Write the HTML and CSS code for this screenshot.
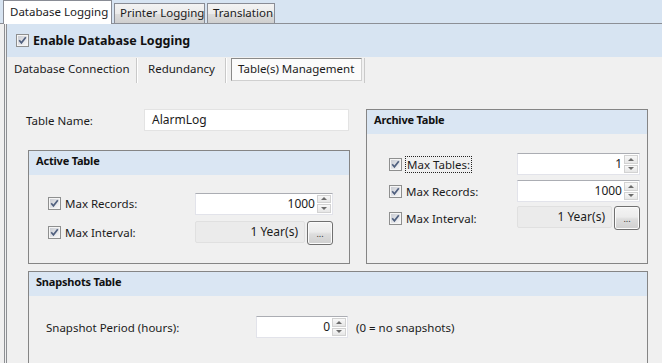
FILE: index.html
```html
<!DOCTYPE html>
<html>
<head>
<meta charset="utf-8">
<link rel="stylesheet" href="styles.css">
</head>
<body>
<svg class="defs" width="0" height="0">
  <defs>
    <linearGradient id="cbg" x1="0" y1="0" x2="1" y2="1">
      <stop offset="0" stop-color="#c9ccd3"/>
      <stop offset="1" stop-color="#f7f7f8"/>
    </linearGradient>
  </defs>
</svg>
<div class="tabstrip">
  <div class="tab tab-active t1">Database Logging</div>
  <div class="tab t2">Printer Logging</div>
  <div class="tab t3">Translation</div>
</div>
<div class="panel">
  <div class="enable-bar">
    <svg class="cb" width="13" height="13" viewBox="0 0 13 13"><rect x="0.5" y="0.5" width="12" height="12" fill="#f5f5f5" stroke="#8e8f8f"/><rect x="2" y="2" width="9" height="9" fill="url(#cbg)"/><path d="M3.2 6.3 L5.4 8.8 L9.8 3.2" stroke="#50607f" stroke-width="1.7" fill="none"/></svg>
    <span class="enable-label">Enable Database Logging</span>
  </div>
  <div class="subtabs">
    <div class="subtab s1">Database Connection</div>
    <div class="subtab s2">Redundancy</div>
    <div class="subtab-active">Table(s) Management</div>
    <div class="subtab-sep"></div>
  </div>
  <div class="content">
    <div class="left-col">
      <div class="name-row">
        <span class="name-label">Table Name:</span>
        <div class="textbox name-box">AlarmLog</div>
      </div>
      <div class="group active-group">
        <div class="group-head">Active Table</div>
        <div class="group-body">
          <div class="row">
            <svg class="cb" width="13" height="13" viewBox="0 0 13 13"><rect x="0.5" y="0.5" width="12" height="12" fill="#f5f5f5" stroke="#8e8f8f"/><rect x="2" y="2" width="9" height="9" fill="url(#cbg)"/><path d="M3.2 6.3 L5.4 8.8 L9.8 3.2" stroke="#50607f" stroke-width="1.7" fill="none"/></svg>
            <span class="lbl">Max Records:</span>
            <div class="textbox num"><span class="val">1000</span><span class="spin"><span class="sp up"><i></i></span><span class="sp down"><i></i></span></span></div>
          </div>
          <div class="row">
            <svg class="cb" width="13" height="13" viewBox="0 0 13 13"><rect x="0.5" y="0.5" width="12" height="12" fill="#f5f5f5" stroke="#8e8f8f"/><rect x="2" y="2" width="9" height="9" fill="url(#cbg)"/><path d="M3.2 6.3 L5.4 8.8 L9.8 3.2" stroke="#50607f" stroke-width="1.7" fill="none"/></svg>
            <span class="lbl">Max Interval:</span>
            <div class="interval"><div class="ro">1 Year(s)</div><div class="btn">...</div></div>
          </div>
        </div>
      </div>
    </div>
    <div class="group archive-group">
      <div class="group-head">Archive Table</div>
      <div class="group-body">
        <div class="row">
          <svg class="cb" width="13" height="13" viewBox="0 0 13 13"><rect x="0.5" y="0.5" width="12" height="12" fill="#f5f5f5" stroke="#8e8f8f"/><rect x="2" y="2" width="9" height="9" fill="url(#cbg)"/><path d="M3.2 6.3 L5.4 8.8 L9.8 3.2" stroke="#50607f" stroke-width="1.7" fill="none"/></svg>
          <span class="lbl"><span class="focus">Max Tables:</span></span>
          <div class="textbox num"><span class="val">1</span><span class="spin"><span class="sp up"><i></i></span><span class="sp down"><i></i></span></span></div>
        </div>
        <div class="row">
          <svg class="cb" width="13" height="13" viewBox="0 0 13 13"><rect x="0.5" y="0.5" width="12" height="12" fill="#f5f5f5" stroke="#8e8f8f"/><rect x="2" y="2" width="9" height="9" fill="url(#cbg)"/><path d="M3.2 6.3 L5.4 8.8 L9.8 3.2" stroke="#50607f" stroke-width="1.7" fill="none"/></svg>
          <span class="lbl">Max Records:</span>
          <div class="textbox num"><span class="val">1000</span><span class="spin"><span class="sp up"><i></i></span><span class="sp down"><i></i></span></span></div>
        </div>
        <div class="row">
          <svg class="cb" width="13" height="13" viewBox="0 0 13 13"><rect x="0.5" y="0.5" width="12" height="12" fill="#f5f5f5" stroke="#8e8f8f"/><rect x="2" y="2" width="9" height="9" fill="url(#cbg)"/><path d="M3.2 6.3 L5.4 8.8 L9.8 3.2" stroke="#50607f" stroke-width="1.7" fill="none"/></svg>
          <span class="lbl">Max Interval:</span>
          <div class="interval"><div class="ro">1 Year(s)</div><div class="btn">...</div></div>
        </div>
      </div>
    </div>
    <div class="group snapshot-group">
      <div class="group-head">Snapshots Table</div>
      <div class="group-body">
        <div class="row">
          <span class="lbl">Snapshot Period (hours):</span>
          <div class="textbox num"><span class="val">0</span><span class="spin"><span class="sp up"><i></i></span><span class="sp down"><i></i></span></span></div>
          <span class="hint">(0 = no snapshots)</span>
        </div>
      </div>
    </div>
  </div>
</div>
</body>
</html>
```
FILE: styles.css
```css
* { box-sizing: border-box; }
html, body { margin: 0; padding: 0; }
body {
  width: 662px;
  height: 363px;
  overflow: hidden;
  background: #f0f0f0;
  font-family: "Noto Sans", "Segoe UI", sans-serif;
  font-size: 11.5px;
  color: #1b1b1b;
}
.defs { position: absolute; }

/* top tabs */
.tabstrip {
  height: 24px;
  background: #d7e4f2;
  border-bottom: 1px solid #8c8f96;
  display: flex;
  align-items: flex-end;
  padding-left: 3px;
  gap: 2px;
}
.tab {
  height: 20px;
  border: 1px solid #898c95;
  border-bottom: none;
  background: linear-gradient(#f3f3f3, #ebebeb 50%, #dddddd 51%, #cfcfcf);
  padding-left: 5px;
  line-height: 18px;
  white-space: nowrap;
}
.tab-active {
  height: 24px;
  margin-bottom: -1px;
  background: #ffffff;
  padding-left: 6px;
  line-height: 21px;
  position: relative;
}
.t1 { width: 109px; }
.t2 { width: 91px; }
.t3 { width: 68px; }

/* panel */
.panel {
  margin-left: 4px;
  border-left: 3px double #8d8f93;
  height: 339px;
}
.enable-bar {
  height: 33px;
  background: #d7e4f2;
  display: flex;
  align-items: center;
  padding-left: 9px;
  gap: 4px;
}
.cb { display: block; flex: none; }
.enable-label {
  font-weight: bold;
  font-size: 12.5px;
  color: #111;
}

.subtabs {
  height: 29px;
  display: flex;
  align-items: flex-start;
  padding-top: 1px;
}
.subtab {
  height: 25px;
  line-height: 22px;
  white-space: nowrap;
  border-right: 1px solid #c9c9c9;
  box-shadow: 1px 0 0 #ffffff;
}
.s1 { width: 130px; padding-left: 7px; }
.s2 { width: 89px; padding-left: 11px; }
.subtab-active {
  margin-left: 5px;
  width: 131px;
  height: 23px;
  line-height: 20px;
  padding-left: 6px;
  background: #fbfbfb;
  border: 1px solid #d0d0d0;
  border-top-color: #8a8a8a;
  border-left-color: #8a8a8a;
  white-space: nowrap;
}
.subtab-sep {
  margin-left: 2px;
  width: 1px;
  height: 25px;
  background: #c9c9c9;
}

/* content */
.content {
  padding: 23px 0 0 21px;
  display: grid;
  grid-template-columns: 322px 282px;
  column-gap: 16px;
  row-gap: 7px;
}
.left-col {
  display: flex;
  flex-direction: column;
  gap: 19px;
}
.name-row {
  display: flex;
  align-items: center;
  height: 22px;
}
.name-label {
  margin-left: -2px;
  width: 118px;
}
.textbox {
  height: 22px;
  background: #ffffff;
  border: 1px solid #e2e3ea;
  border-top-color: #abadb3;
}
.name-box {
  width: 205px;
  border-color: #e3e3e3;
  padding-left: 7px;
  line-height: 19px;
  font-size: 12px;
}

.group {
  border: 1px solid #858585;
}
.group-head {
  height: 24px;
  background: #dae6f3;
  font-weight: bold;
  font-size: 11px;
  letter-spacing: -0.2px;
  color: #111;
  padding-left: 7px;
  line-height: 19px;
}
.group-body {
  display: flex;
  flex-direction: column;
  gap: 5px;
}
.row {
  display: flex;
  align-items: center;
  height: 22px;
}
.row .cb { margin-right: 4px; }

.active-group { height: 114px; }
.active-group .group-body { padding: 17px 0 0 19px; gap: 6px; }
.active-group .lbl { width: 130px; }
.active-group .textbox, .active-group .interval { width: 138px; }
.active-group .row { height: 23px; }

.archive-group { height: 155px; }
.archive-group .group-body { padding: 19px 0 0 22px; }
.archive-group .lbl { width: 111px; }
.archive-group .textbox, .archive-group .interval { width: 123px; }

.snapshot-group {
  grid-column: 1 / 3;
  height: 100px;
}
.snapshot-group .group-body { padding: 20px 0 0 17px; }
.snapshot-group .lbl { width: 210px; }
.snapshot-group .textbox { width: 92px; }
.hint { margin-left: 8px; }

.focus {
  outline: 1px dotted #222;
  outline-offset: 0;
  padding: 0 1px;
}

.num {
  display: flex;
  align-items: stretch;
  padding: 1px;
}
.num .val {
  flex: 1;
  text-align: right;
  padding-right: 2px;
  line-height: 18px;
  font-size: 12px;
}
.spin {
  width: 14px;
  display: flex;
  flex-direction: column;
  gap: 1px;
}
.sp {
  flex: 1;
  border: 1px solid #d2d2d2;
  background: linear-gradient(#f8f8f8, #e6e6e6);
  display: flex;
  align-items: center;
  justify-content: center;
}
.sp i {
  display: block;
  width: 0;
  height: 0;
  border-left: 3px solid transparent;
  border-right: 3px solid transparent;
}
.up i { border-bottom: 3px solid #6b6b6b; }
.down i { border-top: 3px solid #6b6b6b; }

.interval {
  display: flex;
  gap: 2px;
  height: 24px;
}
.ro {
  flex: 1;
  height: 22px;
  margin-top: 0;
  background: #ebebeb;
  border: 1px solid #e0e0e0;
  border-radius: 2px;
  text-align: right;
  padding-right: 6px;
  line-height: 19px;
  font-size: 12px;
}
.btn {
  width: 26px;
  height: 24px;
  border: 1px solid #707070;
  border-radius: 3px;
  background: linear-gradient(#f4f4f4, #ececec 45%, #dddddd 55%, #cfcfcf);
  box-shadow: inset 0 0 0 1px #fbfbfb;
  text-align: center;
  font-size: 9px;
  line-height: 24px;
  color: #333;
}
```
